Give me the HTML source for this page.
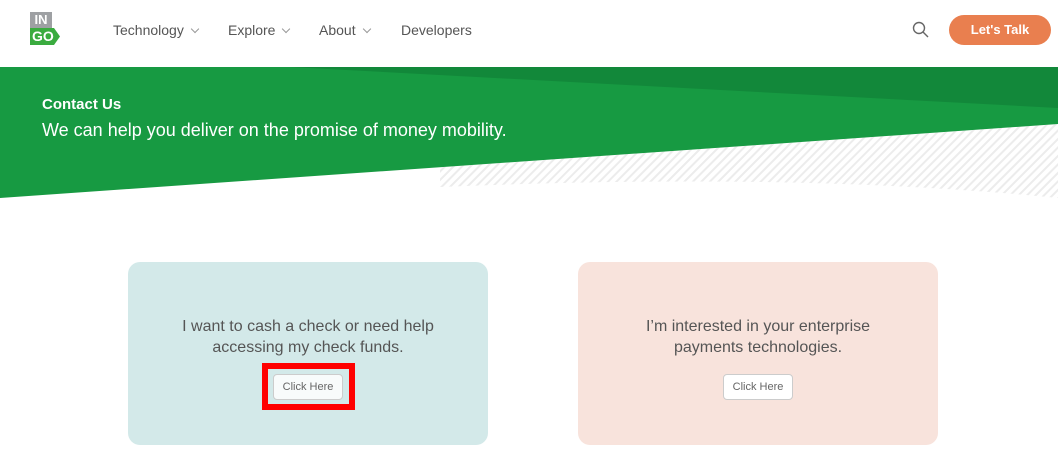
<!DOCTYPE html>
<html><head><meta charset="utf-8"><style>
*{margin:0;padding:0;box-sizing:border-box}
body{width:1058px;height:471px;overflow:hidden;background:#fff;font-family:"Liberation Sans",sans-serif;position:relative}
.nav{position:absolute;top:22px;font-size:14px;color:#555}
.chev{display:inline-block;width:6px;height:6px;border-right:1px solid #999;border-bottom:1px solid #999;transform:rotate(45deg);margin-left:8px;position:relative;top:-3px}
.card{position:absolute;top:262px;width:360px;height:183px;border-radius:12px;text-align:center;color:#555;font-size:16px;line-height:21px}
.btn{position:absolute;width:70px;height:26px;border:1px solid #ccc;border-radius:4px;font-size:11px;line-height:24px;color:#666;background:#f8fbfb}
</style></head><body>
<div style="position:absolute;left:30px;top:12px;width:22px;height:16px;background:#9ea0a3;color:#fff;font-weight:bold;font-size:13px;line-height:16px;text-align:center">IN</div>
<div style="position:absolute;left:30px;top:28px;width:30px;height:17px;background:#3aab3f;color:#fff;font-weight:bold;font-size:14px;line-height:17px;padding-left:2px;clip-path:polygon(0 0,80% 0,100% 50%,80% 100%,0 100%)">GO</div>
<div class="nav" style="left:113px">Technology<span class="chev"></span></div>
<div class="nav" style="left:228px">Explore<span class="chev"></span></div>
<div class="nav" style="left:319px">About<span class="chev"></span></div>
<div class="nav" style="left:401px">Developers</div>
<svg style="position:absolute;left:912px;top:21px" width="18" height="18"><circle cx="7" cy="7" r="5.5" fill="none" stroke="#666" stroke-width="1.4"/><line x1="11" y1="11" x2="16" y2="16" stroke="#666" stroke-width="1.4"/></svg>
<div style="position:absolute;left:949px;top:15px;width:102px;height:30px;border-radius:15px;background:#e97f4f;color:#fff;font-weight:bold;font-size:13px;line-height:30px;text-align:center">Let's Talk</div>
<svg style="position:absolute;left:0;top:67px" width="1058" height="135">
<defs><pattern id="h" width="6" height="6" patternUnits="userSpaceOnUse" patternTransform="rotate(45)"><rect width="6" height="6" fill="#fff"/><rect width="2" height="6" fill="#ececec"/></pattern></defs>
<path d="M440 100 L1058 57 L1058 131 Q800 105 440 120Z" fill="url(#h)"/>
<path d="M0 0 L1058 0 L1058 57 L0 131Z" fill="#179a42"/>
<path d="M290 0 L1058 0 L1058 41Z" fill="#12883a"/>
</svg>
<div style="position:absolute;left:42px;top:96px;color:#fff;font-weight:bold;font-size:15px">Contact Us</div>
<div style="position:absolute;left:42px;top:120px;color:#fff;font-size:18px">We can help you deliver on the promise of money mobility.</div>
<div class="card" style="left:128px;background:#d3e9e9"><div style="margin-top:54px">I want to cash a check or need help<br>accessing my check funds.</div></div>
<div style="position:absolute;left:262px;top:363px;width:93px;height:47px;border:6px solid #f00"></div>
<div class="btn" style="left:273px;top:374px;text-align:center">Click Here</div>
<div class="card" style="left:578px;background:#f8e3dc"><div style="margin-top:54px">I’m interested in your enterprise<br>payments technologies.</div></div>
<div class="btn" style="left:723px;top:374px;text-align:center;background:#fff">Click Here</div>
</body></html>
